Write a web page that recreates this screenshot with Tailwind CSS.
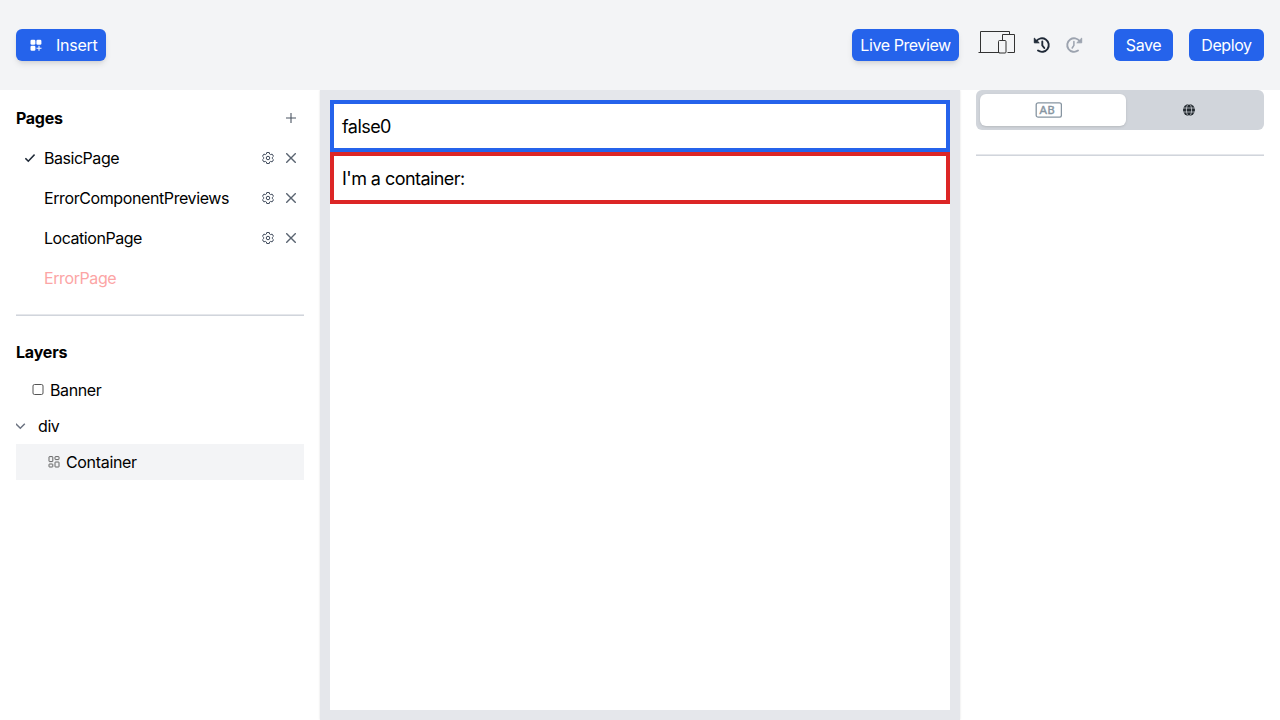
<!DOCTYPE html>
<html lang="en">
<head>
<meta charset="utf-8">
<title>Page editor</title>
<script src="https://cdn.jsdelivr.net/npm/@tailwindcss/browser@4"></script>
</head>
<body class="h-[720px] w-[1280px] overflow-hidden bg-white font-['Inter',sans-serif] text-base text-black tracking-[-0.4px]">
<svg class="hidden">
  <symbol id="gear" viewBox="0 0 24 24" fill="none" stroke="currentColor" stroke-width="1.9" stroke-linejoin="round">
    <path d="M9.500 1h5l.7 3 2 1.200 3-1L23 8.500l-2.300 2.200v2.600L23 15.500l-2.800 4.300-3-1-2 1.200-.7 3h-5l-.7-3-2-1.200-3 1L1 15.500l2.300-2.200v-2.600L1 8.500l2.800-4.300 3 1 2-1.200z"/><circle cx="12" cy="12" r="3.500"/>
  </symbol>
  <symbol id="close" viewBox="0 0 10 10"><path d="M.2.2l9.600 9.600M9.800.2L.2 9.800" fill="none" stroke="#596370" stroke-width="1.400"/></symbol>
</svg>
<div class="flex h-full flex-col">
  <header class="relative flex h-[90px] shrink-0 items-center bg-gray-100 px-4 text-white">
    <button class="flex h-8 w-[89.5px] items-center rounded-md bg-[#2563eb] pl-[14px] shadow-md">
      <svg class="mr-[14px] h-3 w-3 shrink-0" viewBox="0 0 12 12" fill="white"><rect x=".5" y=".8" width="4.900" height="4.900" rx="1.300"/><rect x="6.400" y=".8" width="5" height="4.900" rx="1.300"/><rect x=".5" y="6.800" width="4.900" height="4.900" rx="1.300"/><path d="M9 6.700v5M6.500 9.200h5" stroke="white" stroke-width="1.100"/></svg>
      <span class="tracking-[-0.25px]">Insert</span>
    </button>
    <div class="flex-1"></div>
    <button class="h-8 w-[107px] rounded-md bg-[#2563eb] whitespace-nowrap shadow-md tracking-[-0.42px]">Live Preview</button>
    <svg class="mb-[6px] ml-[19px] h-6 w-[38px]" viewBox="0 0 38 24" fill="none" stroke="#333" stroke-width="1"><path d="M2.500 22V1.500h29V4M.5 22.500h21M29.500 22.500h7V4.500h-12V10"/><rect x="20.500" y="10.500" width="7.500" height="12.500" rx="1"/></svg>
    <svg class="ml-[17px] h-[18px] w-[18px]" viewBox="0 0 18 18" fill="none" stroke="#1f2937" stroke-width="1.900" stroke-linecap="round" stroke-linejoin="round"><path d="M3.300 5.300A6.800 6.800 0 1 1 5 14.600M9.300 5.500v3.900l2 2.600"/><path d="M1.300 2.500v4.300h4.500z" fill="#1f2937" stroke-width="1"/></svg>
    <svg class="ml-[14px] h-[18px] w-[18px]" viewBox="0 0 18 18" fill="none" stroke="#9ca3af" stroke-width="1.900" stroke-linecap="round" stroke-linejoin="round"><path d="M14.700 5.300A6.800 6.800 0 1 0 13 14.600"/><path d="M8.900 5.500v3.900L7.200 12" stroke-width="1.500"/><path d="M16.700 2.500v4.300h-4.500z" fill="#9ca3af" stroke-width="1"/></svg>
    <button class="ml-[31px] h-8 w-[59px] rounded-md bg-[#2563eb]">Save</button>
    <button class="ml-4 h-8 w-[75px] rounded-md bg-[#2563eb]">Deploy</button>
  </header>
  <div class="flex min-h-0 flex-1 overflow-hidden">
    <aside class="w-80 shrink-0 px-4 pt-2">
      <div class="flex h-10 items-center justify-between pr-2">
        <h2 class="font-bold tracking-[-0.3px]">Pages</h2>
        <svg class="h-[10px] w-[10px]" viewBox="0 0 10 10"><path d="M5 0v10M0 5h10" stroke="#4b5563" stroke-width="1.100"/></svg>
      </div>
      <div class="flex h-10 items-center pr-2 text-gray-700">
        <svg class="mr-[9px] ml-[9px] h-[10px] w-[10px]" viewBox="0 0 10 10"><path d="M.4 5.200l2.900 3L9.600 1.600" fill="none" stroke="#1f2937" stroke-width="1.600"/></svg>
        <span class="flex-1 text-black tracking-[-0.46px]">BasicPage</span>
        <svg class="mr-3 h-3 w-3"><use href="#gear"/></svg><svg class="h-[10px] w-[10px]"><use href="#close"/></svg>
      </div>
      <div class="flex h-10 items-center pr-2 pl-7 text-gray-700">
        <span class="flex-1 text-black">ErrorComponentPreviews</span>
        <svg class="mr-3 h-3 w-3"><use href="#gear"/></svg><svg class="h-[10px] w-[10px]"><use href="#close"/></svg>
      </div>
      <div class="flex h-10 items-center pr-2 pl-7 text-gray-700">
        <span class="flex-1 text-black tracking-[-0.46px]">LocationPage</span>
        <svg class="mr-3 h-3 w-3"><use href="#gear"/></svg><svg class="h-[10px] w-[10px]"><use href="#close"/></svg>
      </div>
      <div class="flex h-10 items-center pl-7 text-[#fca5a5]">ErrorPage</div>
      <hr class="mt-4 border-t border-b border-t-gray-200 border-b-gray-300">
      <h2 class="mt-6 mb-2 font-bold tracking-[-0.2px]">Layers</h2>
      <div class="flex h-9 items-center pl-4"><svg class="mr-[6px] h-3 w-3" viewBox="0 0 12 12"><rect x="1" y=".5" width="10" height="10" rx="1.500" fill="none" stroke="#555"/></svg>Banner</div>
      <div class="flex h-9 items-center"><svg class="mr-3 h-[10px] w-[10px]" viewBox="0 0 10 10"><path d="M-.2 2.800L4.300 7.200 8.800 2.800" fill="none" stroke="#6b7280" stroke-width="1.500"/></svg>div</div>
      <div class="flex h-9 items-center bg-gray-100 pl-8 tracking-[-0.33px]"><svg class="mr-[6px] h-3 w-3" viewBox="0 0 12 12" fill="none" stroke="#555" stroke-width=".9"><rect x="1" y=".6" width="3.800" height="5" rx=".5"/><rect x="7" y=".6" width="4" height="3" rx=".5"/><rect x="1" y="8" width="3.800" height="3" rx=".5"/><rect x="7" y="6" width="4" height="5" rx=".5"/></svg>Container</div>
    </aside>
    <main class="flex w-[640px] shrink-0 flex-col bg-gray-200 p-[10px] shadow-[0_0_2px_rgba(0,0,0,0.12)]">
      <div class="flex-1 bg-white text-lg tracking-[-0.55px]">
        <div class="flex h-[52px] items-center border-4 border-[#2563eb] pt-[2px] pl-2">false0</div>
        <div class="flex h-[52px] items-center border-4 border-[#dc2626] pt-[2px] pl-2">I'm a container:</div>
      </div>
    </main>
    <aside class="w-80 shrink-0 px-4">
      <div class="flex h-10 rounded-md bg-[#d1d5db] p-1">
        <div class="flex w-[146px] items-center justify-center rounded-md bg-white shadow">
          <svg class="mr-[9px] h-4 w-[27px]" viewBox="0 0 27 16" fill="none" stroke="#8795a1"><rect x="1.200" y=".8" width="25.200" height="14.400" rx="2" stroke-width="1.300"/><text x="4.500" y="12" fill="#8795a1" stroke="#8795a1" stroke-width=".45" font-family="Lato, sans-serif" font-size="11" font-weight="400" letter-spacing=".5">AB</text></svg>
        </div>
        <div class="flex flex-1 items-center pl-[57px]">
          <svg class="h-3 w-3" viewBox="0 0 12 12"><circle cx="6" cy="6" r="6" fill="#22292f"/><g fill="none" stroke="#d1d5db" stroke-width=".75"><path d="M0 4h12M0 8h12"/><ellipse cx="6" cy="6" rx="2.600" ry="6"/></g></svg>
        </div>
      </div>
      <hr class="mt-6 border-t border-b border-t-gray-200 border-b-gray-300">
    </aside>
  </div>
</div>
</body>
</html>
